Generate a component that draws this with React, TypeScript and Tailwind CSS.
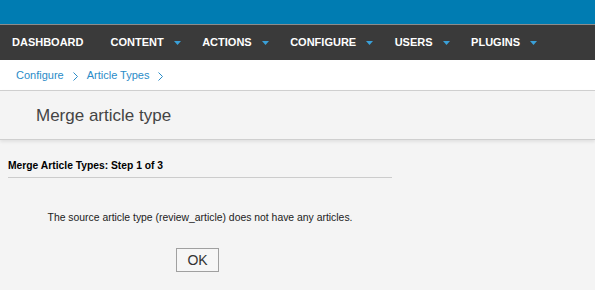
const navItems = [
  { label: "DASHBOARD", caret: false },
  { label: "CONTENT", caret: true },
  { label: "ACTIONS", caret: true },
  { label: "CONFIGURE", caret: true },
  { label: "USERS", caret: true },
  { label: "PLUGINS", caret: true },
];

function Caret() {
  return (
    <svg width="7" height="4" viewBox="0 0 7 4" className="ml-[10px] mt-[1px]">
      <path d="M0 0h7L3.5 4z" fill="#3aa0d8" />
    </svg>
  );
}

function Chevron() {
  return (
    <svg width="5" height="9" viewBox="0 0 5 9" className="mx-[9px] mt-[2px]">
      <path d="M0.5 0.5l4 4-4 4" fill="none" stroke="#2a8cc8" strokeWidth="1" />
    </svg>
  );
}

export default function App() {
  return (
    <div
      className="w-[595px] h-[290px] bg-[#f4f4f4] overflow-hidden"
      style={{ fontFamily: '"Liberation Sans", Arial, sans-serif' }}
    >
      {/* top bar */}
      <div className="h-[24px] bg-[#007cb2]" />
      <div className="h-px bg-[#8c8c8c]" />

      {/* main nav */}
      <nav className="h-[35px] bg-[#3a3a3a] flex items-center">
        {navItems.map((item) => (
          <div
            key={item.label}
            className={`flex items-center pl-[12px] ${item.caret ? "pr-[9.5px]" : "pr-[15px]"} text-[11px] font-bold text-white`}
          >
            <span>{item.label}</span>
            {item.caret && <Caret />}
          </div>
        ))}
      </nav>

      {/* breadcrumb */}
      <div className="h-[30px] bg-white flex items-center pl-[16px] text-[11px] text-[#2a8cc8]">
        <span>Configure</span>
        <Chevron />
        <span>Article Types</span>
        <Chevron />
      </div>

      {/* page header */}
      <div className="border-t border-[#cfcfcf] border-b bg-[#f4f4f4] h-[50px] flex items-center pl-[36px] shadow-[0_2px_3px_rgba(0,0,0,0.08)]">
        <h1 className="text-[17px] text-[#444] leading-none">Merge article type</h1>
      </div>

      {/* wizard */}
      <div className="ml-[8px] w-[384px]">
        <div className="mt-[19px] pb-[4px] border-b border-[#cccccc] text-[10.3px] font-bold text-black leading-[14px]">
          Merge Article Types: Step 1 of 3
        </div>
        <p className="mt-[33px] text-center text-[10.4px] text-[#222] leading-[14px]">
          The source article type (review_article) does not have any articles.
        </p>
        <div className="mt-[23px] pl-[168px]">
          <button className="w-[43px] h-[24px] border border-[#a0a0a0] bg-[#f6f6f6] text-[14px] text-[#333] leading-none">
            OK
          </button>
        </div>
      </div>
    </div>
  );
}
